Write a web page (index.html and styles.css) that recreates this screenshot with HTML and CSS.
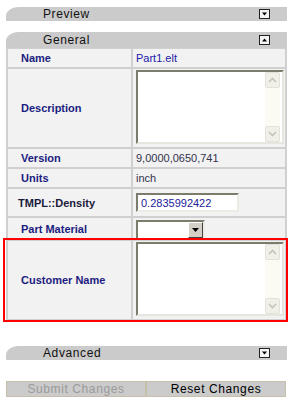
FILE: index.html
```html
<!DOCTYPE html>
<html lang="en">
<head>
    <meta charset="UTF-8">
    <title>Part Properties</title>
    <link rel="stylesheet" href="styles.css">
</head>
<body>

    <!-- Preview panel (collapsed) -->
    <div class="panel-head head-preview">
        <span class="head-title">Preview</span>
        <svg class="toggle" width="11" height="10" viewBox="0 0 11 10"><rect x="0.5" y="0.5" width="10" height="9" fill="#f4f4f4" stroke="#222"/><path d="M3 3.5h5l-2.5 3z" fill="#000"/></svg>
    </div>

    <!-- General panel (open) -->
    <div class="panel-head head-general">
        <span class="head-title">General</span>
        <svg class="toggle" width="11" height="10" viewBox="0 0 11 10"><rect x="0.5" y="0.5" width="10" height="9" fill="#f4f4f4" stroke="#222"/><path d="M3 6.5h5l-2.5 -3z" fill="#000"/></svg>
    </div>
    <div class="props">
        <div class="row row-name">
            <div class="label">Name</div>
            <div class="value value-blue">Part1.elt</div>
        </div>
        <div class="row row-area">
            <div class="label">Description</div>
            <div class="value">
                <div class="area">
                    <textarea></textarea>
                    <div class="scroll">
                        <span class="sbtn"><svg width="9" height="6" viewBox="0 0 9 6"><path d="M1 5l3.5-3.5L8 5" fill="none" stroke="#c4c4bc" stroke-width="1.6"/></svg></span>
                        <span class="sbtn"><svg width="9" height="6" viewBox="0 0 9 6"><path d="M1 1l3.5 3.5L8 1" fill="none" stroke="#c4c4bc" stroke-width="1.6"/></svg></span>
                    </div>
                </div>
            </div>
        </div>
        <div class="row row-name">
            <div class="label">Version</div>
            <div class="value">9,0000,0650,741</div>
        </div>
        <div class="row row-name">
            <div class="label">Units</div>
            <div class="value">inch</div>
        </div>
        <div class="row row-density">
            <div class="label label-dark">TMPL::Density</div>
            <div class="value">
                <input class="field" type="text" value="0.2835992422">
            </div>
        </div>
        <div class="row row-material">
            <div class="label">Part Material</div>
            <div class="value">
                <div class="combo">
                    <span class="combo-text"></span>
                    <span class="combo-btn"><svg width="7" height="4" viewBox="0 0 7 4"><path d="M0 0h7l-3.5 4z" fill="#000"/></svg></span>
                </div>
            </div>
        </div>
        <div class="row row-area row-marked">
            <div class="label">Customer Name</div>
            <div class="value">
                <div class="area">
                    <textarea></textarea>
                    <div class="scroll">
                        <span class="sbtn"><svg width="9" height="6" viewBox="0 0 9 6"><path d="M1 5l3.5-3.5L8 5" fill="none" stroke="#c4c4bc" stroke-width="1.6"/></svg></span>
                        <span class="sbtn"><svg width="9" height="6" viewBox="0 0 9 6"><path d="M1 1l3.5 3.5L8 1" fill="none" stroke="#c4c4bc" stroke-width="1.6"/></svg></span>
                    </div>
                </div>
            </div>
        </div>
    </div>

    <!-- Advanced panel (collapsed) -->
    <div class="panel-head head-advanced">
        <span class="head-title">Advanced</span>
        <svg class="toggle" width="11" height="10" viewBox="0 0 11 10"><rect x="0.5" y="0.5" width="10" height="9" fill="#f4f4f4" stroke="#222"/><path d="M3 3.5h5l-2.5 3z" fill="#000"/></svg>
    </div>

    <div class="actions">
        <button class="btn btn-off">Submit Changes</button>
        <button class="btn">Reset Changes</button>
    </div>

</body>
</html>
```

FILE: styles.css
```css
body {
    margin: 0;
    padding: 7px 5px 0 6px;
    background: #fff;
    font-family: "Liberation Sans", Arial, sans-serif;
}

/* Panel header bars */
.panel-head {
    display: flex;
    align-items: center;
    justify-content: space-between;
    height: 14px;
    padding: 0 17px 0 37px;
    background-color: #cbcbcb;
    border-top-left-radius: 12px 9px;
}

.head-title {
    font-size: 12px;
    letter-spacing: 0.6px;
    color: #111;
}

.toggle {
    display: block;
}

.head-general {
    margin-top: 11px;
    height: 16px;
}

.head-advanced {
    margin-top: 25px;
}

/* Property table */
.props {
    display: flex;
    flex-direction: column;
    gap: 2px;
    padding: 1px 2px 2px 2px;
    background-color: #d0d0d0;
}

.row {
    display: grid;
    grid-template-columns: 123px 1fr;
    gap: 2px;
}

.row-name {
    height: 18px;
}

.row-density {
    height: 27px;
}

.row-material {
    height: 21px;
}

/* Red highlight round the customer row */
.row-marked {
    position: relative;
}

.row-marked::after {
    content: "";
    position: absolute;
    top: -3px;
    bottom: -3px;
    left: -5px;
    right: -3px;
    border: 2px solid #f00;
    pointer-events: none;
}

.label {
    display: flex;
    align-items: center;
    padding-left: 13px;
    background-color: #f2f2f2;
    font-size: 11px;
    font-weight: bold;
    color: #1c1c80;
}

.label-dark {
    padding-left: 10px;
    color: #1a1a3a;
}

.value {
    display: flex;
    align-items: center;
    padding-left: 3px;
    background-color: #f2f2f2;
    font-size: 11px;
    color: #33334d;
}

.value-blue {
    color: #2121a8;
}

.row-area .value {
    align-items: flex-start;
    padding-top: 1px;
    padding-bottom: 3px;
}

/* Textarea with XP style scrollbar */
.area {
    display: flex;
    width: 144px;
    height: 70px;
    border: 2px solid;
    border-color: #7c7c6c #e6e6de #e6e6de #7c7c6c;
    background: #fff;
}

.area textarea {
    flex: 1;
    border: none;
    margin: 0;
    padding: 0;
    resize: none;
    outline: none;
}

.scroll {
    display: flex;
    flex-direction: column;
    justify-content: space-between;
    width: 15px;
    margin-right: 2px;
    background-color: #fbfbf4;
}

.sbtn {
    display: flex;
    align-items: center;
    justify-content: center;
    height: 14px;
    border: 1px solid #e2e2da;
    border-radius: 2px;
    background-color: #f0f0e9;
}

.field {
    box-sizing: border-box;
    width: 103px;
    height: 19px;
    margin: 0;
    padding: 0 3px;
    border: 2px solid;
    border-color: #7c7c6c #ecece4 #ecece4 #7c7c6c;
    font-family: "Liberation Sans", Arial, sans-serif;
    font-size: 11px;
    color: #22229a;
}

.combo {
    display: flex;
    box-sizing: border-box;
    width: 69px;
    height: 20px;
    margin-top: 2px;
    align-self: flex-start;
    border: 2px solid;
    border-color: #7c7c6c #ecece4 #ecece4 #7c7c6c;
    background: #fff;
}

.combo-text {
    flex: 1;
}

.combo-btn {
    display: flex;
    align-items: center;
    justify-content: center;
    width: 13px;
    border: 1px solid;
    border-color: #fff #404040 #404040 #fff;
    background-color: #d4d0c8;
}

/* Bottom buttons */
.actions {
    display: flex;
    margin-top: 21px;
    margin-right: 1px;
}

.btn {
    flex: 1;
    height: 16px;
    padding: 0;
    border: 1px solid #c6c0a8;
    background-color: #cbcbcb;
    font-family: "Liberation Sans", Arial, sans-serif;
    font-size: 12px;
    letter-spacing: 0.6px;
    color: #000;
}

.btn-off {
    color: #9a9a9a;
}
```
